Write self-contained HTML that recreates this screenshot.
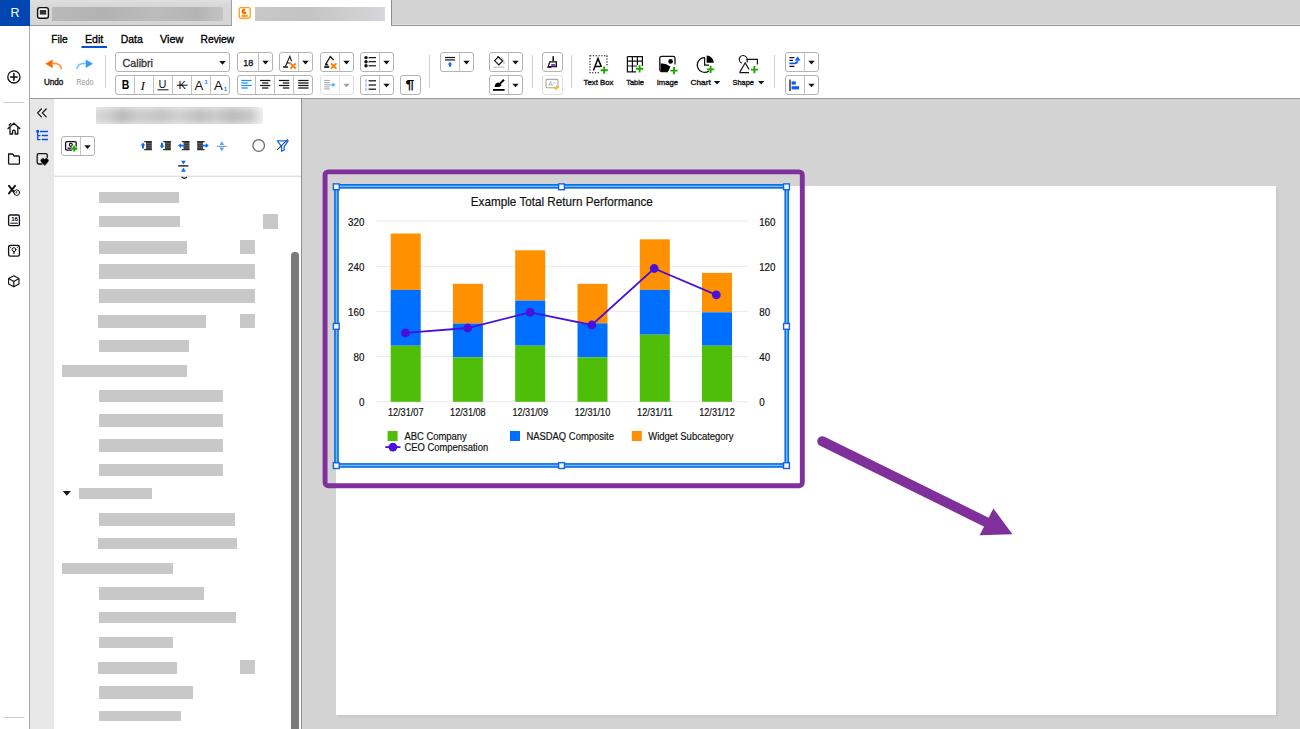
<!DOCTYPE html>
<html lang="en">
<head>
<meta charset="utf-8">
<title>Report Editor</title>
<style>
html,body{margin:0;padding:0;}
body{width:1300px;height:729px;overflow:hidden;position:relative;background:#d3d3d3;font-family:"Liberation Sans",sans-serif;color:#000;}
.abs{position:absolute;}
#side{left:0;top:0;width:29px;height:729px;background:#fff;border-right:1px solid #a8a8a8;}
#logo{left:0;top:0;width:30px;height:26px;background:#0047b3;color:#fff;font-size:12.5px;line-height:26px;text-align:center;}
#tabbar{left:30px;top:0;width:1270px;height:25px;background:#d3d3d3;border-bottom:1px solid #9a9a9a;box-shadow:inset 0 -1px 0 #dedede;}
#tab1{left:30px;top:0;width:201px;height:25px;background:linear-gradient(180deg,#dfdfdf,#d8d8d8 20%,#d5d5d5);border-right:1px solid #a0a0a0;}
#tab2{left:232px;top:0;width:159px;height:26px;background:#fff;border-right:1px solid #8e8e8e;}
#toolbar{left:30px;top:26px;width:1270px;height:72px;background:#fff;border-bottom:1px solid #9a9a9a;}
#strip{left:30px;top:99px;width:24.4px;height:630px;background:#e7e7e7;}
#panel{left:54px;top:99px;width:247px;height:630px;background:#fff;border-right:1px solid #929292;}
#page{left:336px;top:186px;width:940px;height:529px;background:#fff;box-shadow:2px 2px 2px #c8c8c8;}
.bar{position:absolute;background:#c8c8c8;}
</style>
</head>
<body>
<div class="abs" id="tabbar"></div>
<div class="abs" id="tab1"></div>
<div class="abs" id="tab2"></div>
<div class="abs" id="toolbar"></div>
<div class="abs" id="side"></div>
<div class="abs" id="logo">R</div>
<div class="abs" id="strip"></div>
<div class="abs" id="panel"></div>
<div class="abs" id="page"></div>
<!--TABS-->
<svg class="abs" style="left:0;top:0" width="400" height="27" viewBox="0 0 400 27">
<rect x="37.6" y="7.6" width="10.8" height="10.6" rx="2.2" fill="#f4f4f4" stroke="#111" stroke-width="1.4"/><rect x="39.8" y="10" width="6.4" height="4.6" fill="#333"/>
<rect x="239.2" y="7.6" width="11" height="10.8" rx="1.8" fill="#fff" stroke="#ff9a1a" stroke-width="1.3"/>
<path d="M244.3 11.4 L244.3 8.7 A2.7 2.7 0 1 0 247 11.4 Z" fill="#ff6a00" transform="rotate(25 244.3 11.4)"/>
<rect x="241.6" y="14.6" width="6.2" height="2.6" fill="#ffa31a"/>
</svg>
<div class="abs" style="left:52px;top:7.3px;width:171px;height:13.4px;background:linear-gradient(90deg,#b9b9b9,#b2b2b2 30%,#bcbcbc 60%,#b4b4b4 85%,#c4c4c4)"></div>
<div class="abs" style="left:255px;top:7.2px;width:129.6px;height:13.4px;background:linear-gradient(90deg,#c9c7c7,#c4c4c4 40%,#cdcdcd 70%,#d6d6dc)"></div>
<!--/TABS-->
<!--MENU-->
<svg class="abs" style="left:54px;top:99px" width="247" height="90" viewBox="54 99 247 90">
<rect x="61.5" y="136.5" width="33" height="19" rx="2.5" fill="#fff" stroke="#b4b4b4"/><line x1="80.5" x2="80.5" y1="137" y2="155" stroke="#c4c4c4"/>
<rect x="65.6" y="141.6" width="10.6" height="8.6" rx="1.4" fill="none" stroke="#111" stroke-width="1.3"/><circle cx="70.8" cy="144.8" r="1.5" fill="none" stroke="#111" stroke-width="1.2"/><path d="M67.6 148.2 H72.4" stroke="#111" stroke-width="1.3"/>
<circle cx="74.3" cy="148.6" r="2.9" fill="#fff"/><path d="M71.4 148.6 H77.2 M74.3 145.7 V151.5" stroke="#1fa700" stroke-width="2.1"/>
<polygon points="84.3,145.3 90.7,145.3 87.5,148.9" fill="#111"/>
<rect x="146" y="141.2" width="5.8" height="8.8" fill="#3a3a3a"/>
<line x1="146" x2="151.8" y1="143.4" y2="143.4" stroke="#777" stroke-width=".6"/>
<line x1="146" x2="151.8" y1="145.6" y2="145.6" stroke="#777" stroke-width=".6"/>
<line x1="146" x2="151.8" y1="147.8" y2="147.8" stroke="#777" stroke-width=".6"/>
<path d="M144.2 141.6 H151.8 M144.2 149.6 H151.8" stroke="#2e2e2e" stroke-width="1.2"/>
<polygon points="143,142.6 145.4,145.6 144,145.6 144,148.4 142,148.4 142,145.6 140.6,145.6" fill="#0a6cff"/>
<rect x="165" y="141.2" width="5.8" height="8.8" fill="#3a3a3a"/>
<line x1="165" x2="170.8" y1="143.4" y2="143.4" stroke="#777" stroke-width=".6"/>
<line x1="165" x2="170.8" y1="145.6" y2="145.6" stroke="#777" stroke-width=".6"/>
<line x1="165" x2="170.8" y1="147.8" y2="147.8" stroke="#777" stroke-width=".6"/>
<path d="M163.2 141.6 H170.8 M163.2 149.6 H170.8" stroke="#2e2e2e" stroke-width="1.2"/>
<polygon points="162,148.6 164.4,145.6 163,145.6 163,142.8 161,142.8 161,145.6 159.6,145.6" fill="#0a6cff"/>
<rect x="183.6" y="141.2" width="5.8" height="8.8" fill="#3a3a3a"/>
<line x1="183.6" x2="189.4" y1="143.4" y2="143.4" stroke="#777" stroke-width=".6"/>
<line x1="183.6" x2="189.4" y1="145.6" y2="145.6" stroke="#777" stroke-width=".6"/>
<line x1="183.6" x2="189.4" y1="147.8" y2="147.8" stroke="#777" stroke-width=".6"/>
<path d="M181.79999999999998 141.6 H189.4 M181.79999999999998 149.6 H189.4" stroke="#2e2e2e" stroke-width="1.2"/>
<polygon points="178,145.6 181,143.2 181,144.7 184.4,144.7 184.4,146.5 181,146.5 181,148" fill="#0a6cff"/>
<rect x="197.2" y="141.2" width="5.8" height="8.8" fill="#3a3a3a"/>
<line x1="197.2" x2="203.0" y1="143.4" y2="143.4" stroke="#777" stroke-width=".6"/>
<line x1="197.2" x2="203.0" y1="145.6" y2="145.6" stroke="#777" stroke-width=".6"/>
<line x1="197.2" x2="203.0" y1="147.8" y2="147.8" stroke="#777" stroke-width=".6"/>
<path d="M197.2 141.6 H204.6 M197.2 149.6 H204.6" stroke="#2e2e2e" stroke-width="1.2"/>
<polygon points="208.8,145.6 205.8,143.2 205.8,144.7 202.6,144.7 202.6,146.5 205.8,146.5 205.8,148" fill="#0a6cff"/>
<line x1="216.8" x2="226.8" y1="146.3" y2="146.3" stroke="#8a8a8a" stroke-width="1"/><polygon points="221.8,141 224.2,145 219.4,145" fill="#55aaff"/><polygon points="221.8,151.6 224.2,147.6 219.4,147.6" fill="#55aaff"/>
<circle cx="258.7" cy="145.5" r="5.8" fill="none" stroke="#6a6a6a" stroke-width="1.3"/>
<path d="M277.4 140.8 H288.2 L284.2 146.6 V150 L281.6 151.2 V146.6 Z" fill="none" stroke="#0a6cff" stroke-width="1.3" stroke-linejoin="round"/><line x1="277.2" y1="149.8" x2="287.8" y2="139.3" stroke="#444" stroke-width="1.1"/>
<line x1="178.2" x2="188.4" y1="165.9" y2="165.9" stroke="#111" stroke-width="1.3"/><polygon points="183.4,164.4 181,160.8 185.8,160.8" fill="#0a6cff"/><polygon points="183.4,167.6 181,171.8 185.8,171.8" fill="#0a6cff"/>
<rect x="54" y="175.6" width="247" height="1.5" fill="#e0e0e0"/>
<path d="M181.6 177 Q184.2 179.6 187 177" fill="none" stroke="#222" stroke-width="1.1"/>
</svg>
<!--/MENU-->
<!--TOOLBAR-->
<svg class="abs" style="left:0;top:0" width="1300" height="100" viewBox="0 0 1300 100" font-family="Liberation Sans, sans-serif">
<line x1="105.5" x2="105.5" y1="55" y2="88" stroke="#cfcfcf"/>
<line x1="429.5" x2="429.5" y1="55" y2="88" stroke="#cfcfcf"/>
<line x1="532.5" x2="532.5" y1="55" y2="88" stroke="#cfcfcf"/>
<line x1="571.5" x2="571.5" y1="55" y2="88" stroke="#cfcfcf"/>
<line x1="774.5" x2="774.5" y1="55" y2="88" stroke="#cfcfcf"/>
<text x="51.3" y="42.8" font-size="11.8" fill="#000" textLength="16.5" lengthAdjust="spacingAndGlyphs" stroke="#000" stroke-width="0.35">File</text>
<text x="84.9" y="42.8" font-size="11.8" fill="#000" textLength="18.4" lengthAdjust="spacingAndGlyphs" stroke="#000" stroke-width="0.35">Edit</text>
<text x="120.8" y="42.8" font-size="11.8" fill="#000" textLength="22.0" lengthAdjust="spacingAndGlyphs" stroke="#000" stroke-width="0.35">Data</text>
<text x="160" y="42.8" font-size="11.8" fill="#000" textLength="23.4" lengthAdjust="spacingAndGlyphs" stroke="#000" stroke-width="0.35">View</text>
<text x="200.5" y="42.8" font-size="11.8" fill="#000" textLength="33.7" lengthAdjust="spacingAndGlyphs" stroke="#000" stroke-width="0.35">Review</text>
<rect x="81.5" y="46" width="25.5" height="2" fill="#0a4fd8"/>
<polygon points="45.2,63.8 52.6,59.5 52.6,68" fill="#ff6a00"/><path d="M52.4 63.5 C57.5 63,61 65.2,61.5 69.2" fill="none" stroke="#ff9636" stroke-width="1.7"/>
<polygon points="93,63.8 85.7,59.5 85.7,68" fill="#3399ff"/><path d="M86 63.5 C81 63,77.5 65.2,76.8 69.2" fill="none" stroke="#7cc6ff" stroke-width="1.7"/>
<text x="43.9" y="85" font-size="8.2" fill="#111" textLength="19.4" lengthAdjust="spacingAndGlyphs" stroke="#111" stroke-width="0.35">Undo</text>
<text x="76.2" y="85" font-size="8.2" fill="#9a9a9a" textLength="17.4" lengthAdjust="spacingAndGlyphs">Redo</text>
<rect x="115.5" y="52.5" width="114.0" height="19.0" rx="2.5" fill="#fff" stroke="#b4b4b4"/>
<text x="122.6" y="66.9" font-size="10.4" fill="#333" textLength="30.3" lengthAdjust="spacingAndGlyphs" stroke="#333" stroke-width="0.3">Calibri</text>
<polygon points="219.3,61.099999999999994 225.7,61.099999999999994 222.5,64.7" fill="#111"/>
<rect x="237.5" y="52.5" width="35.0" height="19.0" rx="2.5" fill="#fff" stroke="#b4b4b4"/>
<line x1="258.5" x2="258.5" y1="53.0" y2="71.0" stroke="#c2c2c2"/>
<text x="243.3" y="66" font-size="9" fill="#111" textLength="10" lengthAdjust="spacingAndGlyphs" stroke="#111" stroke-width="0.3">18</text>
<polygon points="262.3,60.8 268.7,60.8 265.5,64.4" fill="#111"/>
<rect x="279.5" y="52.5" width="33.0" height="19.0" rx="2.5" fill="#fff" stroke="#b4b4b4"/>
<line x1="298.5" x2="298.5" y1="53.0" y2="71.0" stroke="#c2c2c2"/>
<path d="M285.6 66 L289.8 56.4 L291.6 61.2 M287.2 63 L290.6 63" fill="none" stroke="#111" stroke-width="1.1"/><rect x="283.2" y="66.2" width="4.6" height="1.6" fill="#111"/>
<path d="M290.4 63.4 L295.8 68.6 M295.8 63.4 L290.4 68.6" stroke="#ff7a00" stroke-width="1.9"/>
<polygon points="302.3,60.8 308.7,60.8 305.5,64.4" fill="#111"/>
<rect x="320.5" y="52.5" width="33.0" height="19.0" rx="2.5" fill="#fff" stroke="#b4b4b4"/>
<line x1="339.5" x2="339.5" y1="53.0" y2="71.0" stroke="#c2c2c2"/>
<path d="M325.6 64.5 L330.3 56.6 L333.6 60" fill="none" stroke="#111" stroke-width="1.2"/><path d="M324.6 65.4 L326.2 62.4 L328.8 65.4 Z" fill="#111"/><rect x="324.2" y="66.2" width="5" height="1.7" fill="#111"/>
<path d="M331 63.4 L336.4 68.6 M336.4 63.4 L331 68.6" stroke="#ff7a00" stroke-width="1.9"/>
<polygon points="343.3,60.8 349.7,60.8 346.5,64.4" fill="#111"/>
<rect x="360.5" y="52.5" width="33.0" height="19.0" rx="2.5" fill="#fff" stroke="#b4b4b4"/>
<line x1="379.5" x2="379.5" y1="53.0" y2="71.0" stroke="#c2c2c2"/>
<circle cx="366" cy="57.6" r="1.7" fill="#111"/><line x1="368.6" x2="376" y1="57.6" y2="57.6" stroke="#111" stroke-width="1.2"/>
<circle cx="366" cy="61.7" r="1.7" fill="#111"/><line x1="368.6" x2="376" y1="61.7" y2="61.7" stroke="#111" stroke-width="1.2"/>
<circle cx="366" cy="65.8" r="1.7" fill="#111"/><line x1="368.6" x2="376" y1="65.8" y2="65.8" stroke="#111" stroke-width="1.2"/>
<polygon points="383.3,60.8 389.7,60.8 386.5,64.4" fill="#111"/>
<rect x="115.5" y="75.5" width="114.0" height="19.0" rx="2.5" fill="#fff" stroke="#b4b4b4"/>
<line x1="134.5" x2="134.5" y1="76.0" y2="94.0" stroke="#c2c2c2"/>
<line x1="153.5" x2="153.5" y1="76.0" y2="94.0" stroke="#c2c2c2"/>
<line x1="172.5" x2="172.5" y1="76.0" y2="94.0" stroke="#c2c2c2"/>
<line x1="191.5" x2="191.5" y1="76.0" y2="94.0" stroke="#c2c2c2"/>
<line x1="210.5" x2="210.5" y1="76.0" y2="94.0" stroke="#c2c2c2"/>
<text x="121.7" y="89.4" font-size="12.5" fill="#000" textLength="7.6" lengthAdjust="spacingAndGlyphs" font-weight="bold">B</text>
<text x="140.6" y="89.6" font-size="13.5" font-style="italic" font-family="Liberation Serif, serif" fill="#111">I</text>
<text x="158.4" y="88.2" font-size="11" fill="#111">U</text>
<line x1="157.5" x2="168.5" y1="89.8" y2="89.8" stroke="#111"/>
<text x="178.6" y="89.2" font-size="11" fill="#111">K</text>
<line x1="177" x2="187.5" y1="85.2" y2="85.2" stroke="#111"/>
<text x="194.6" y="89.6" font-size="13.2" fill="#111">A</text>
<text x="204.6" y="83.6" font-size="6" fill="#1e7bff" font-weight="bold">1</text>
<text x="214" y="89.6" font-size="13.2" fill="#111">A</text>
<text x="223.8" y="91.2" font-size="6" fill="#1e7bff" font-weight="bold">1</text>
<rect x="237.5" y="75.5" width="75.0" height="19.0" rx="2.5" fill="#fff" stroke="#b4b4b4"/>
<line x1="255.5" x2="255.5" y1="76.0" y2="94.0" stroke="#c2c2c2"/>
<line x1="274.5" x2="274.5" y1="76.0" y2="94.0" stroke="#c2c2c2"/>
<line x1="293.5" x2="293.5" y1="76.0" y2="94.0" stroke="#c2c2c2"/>
<line x1="241.3" x2="251.70000000000002" y1="80.5" y2="80.5" stroke="#1e8fff" stroke-width="1.25"/>
<line x1="260.0" x2="270.4" y1="80.5" y2="80.5" stroke="#111" stroke-width="1.25"/>
<line x1="278.90000000000003" x2="289.3" y1="80.5" y2="80.5" stroke="#111" stroke-width="1.25"/>
<line x1="298.2" x2="308.6" y1="80.5" y2="80.5" stroke="#111" stroke-width="1.25"/>
<line x1="241.3" x2="247.8" y1="83" y2="83" stroke="#1e8fff" stroke-width="1.25"/>
<line x1="261.95" x2="268.45" y1="83" y2="83" stroke="#111" stroke-width="1.25"/>
<line x1="282.8" x2="289.3" y1="83" y2="83" stroke="#111" stroke-width="1.25"/>
<line x1="298.2" x2="308.6" y1="83" y2="83" stroke="#111" stroke-width="1.25"/>
<line x1="241.3" x2="251.70000000000002" y1="85.5" y2="85.5" stroke="#1e8fff" stroke-width="1.25"/>
<line x1="260.0" x2="270.4" y1="85.5" y2="85.5" stroke="#111" stroke-width="1.25"/>
<line x1="278.90000000000003" x2="289.3" y1="85.5" y2="85.5" stroke="#111" stroke-width="1.25"/>
<line x1="298.2" x2="308.6" y1="85.5" y2="85.5" stroke="#111" stroke-width="1.25"/>
<line x1="241.3" x2="247.8" y1="88" y2="88" stroke="#1e8fff" stroke-width="1.25"/>
<line x1="261.95" x2="268.45" y1="88" y2="88" stroke="#111" stroke-width="1.25"/>
<line x1="282.8" x2="289.3" y1="88" y2="88" stroke="#111" stroke-width="1.25"/>
<line x1="298.2" x2="308.6" y1="88" y2="88" stroke="#111" stroke-width="1.25"/>
<rect x="320.5" y="75.5" width="33.0" height="19.0" rx="2.5" fill="#fff" stroke="#e0e0e0"/>
<line x1="339.5" x2="339.5" y1="76.0" y2="94.0" stroke="#e6e6e6"/>
<line x1="324.2" x2="329.8" y1="80.5" y2="80.5" stroke="#a8a8a8" stroke-width="1.1"/>
<line x1="324.2" x2="329.8" y1="82.6" y2="82.6" stroke="#a8a8a8" stroke-width="1.1"/>
<line x1="324.2" x2="329.8" y1="84.7" y2="84.7" stroke="#a8a8a8" stroke-width="1.1"/>
<line x1="324.2" x2="329.8" y1="86.8" y2="86.8" stroke="#a8a8a8" stroke-width="1.1"/>
<line x1="324.2" x2="329.8" y1="88.9" y2="88.9" stroke="#a8a8a8" stroke-width="1.1"/>
<line x1="329.8" x2="333" y1="84.8" y2="84.8" stroke="#6bbcff" stroke-width="1.2"/><polygon points="332.4,82.4 335.6,84.8 332.4,87.2" fill="#4db2ff"/>
<polygon points="343.3,83.7 349.7,83.7 346.5,87.30000000000001" fill="#a0a0a0"/>
<rect x="360.5" y="75.5" width="33.0" height="19.0" rx="2.5" fill="#fff" stroke="#b4b4b4"/>
<line x1="379.5" x2="379.5" y1="76.0" y2="94.0" stroke="#c2c2c2"/>
<line x1="368.6" x2="376" y1="80.8" y2="80.8" stroke="#111" stroke-width="1.25"/>
<rect x="365.4" y="79.2" width="1.2" height="3.2" fill="#8fb4e8"/>
<line x1="368.6" x2="376" y1="85" y2="85" stroke="#111" stroke-width="1.25"/>
<rect x="365.4" y="83.4" width="1.2" height="3.2" fill="#8fb4e8"/>
<line x1="368.6" x2="376" y1="89.2" y2="89.2" stroke="#111" stroke-width="1.25"/>
<rect x="365.4" y="87.60000000000001" width="1.2" height="3.2" fill="#8fb4e8"/>
<polygon points="383.3,83.7 389.7,83.7 386.5,87.30000000000001" fill="#111"/>
<rect x="400.5" y="75.5" width="20.0" height="19.0" rx="2.5" fill="#fff" stroke="#b4b4b4"/>
<text x="405.4" y="88.9" font-size="13.5" fill="#000" textLength="8.8" lengthAdjust="spacingAndGlyphs" font-weight="bold">¶</text>
<rect x="440.5" y="52.5" width="33.0" height="19.0" rx="2.5" fill="#fff" stroke="#b4b4b4"/>
<line x1="459.5" x2="459.5" y1="53.0" y2="71.0" stroke="#c2c2c2"/>
<line x1="445" x2="455" y1="57.5" y2="57.5" stroke="#111" stroke-width="1.2"/><line x1="445" x2="455" y1="59.9" y2="59.9" stroke="#111" stroke-width="1.2"/>
<polygon points="450,62 452.4,64.4 451,64.4 451,66.8 449,66.8 449,64.4 447.6,64.4" fill="#0a6cff"/>
<polygon points="463.3,60.8 469.7,60.8 466.5,64.4" fill="#111"/>
<rect x="489.5" y="52.5" width="33.0" height="19.0" rx="2.5" fill="#fff" stroke="#b4b4b4"/>
<line x1="508.5" x2="508.5" y1="53.0" y2="71.0" stroke="#c2c2c2"/>
<path d="M494.6 60.6 L498.4 56.8 L502.6 61 L498.8 64.8 Z" fill="#fff" stroke="#111" stroke-width="1.2"/><path d="M497.6 56.2 L499.4 58" stroke="#111" stroke-width="1"/><path d="M501 57.5 Q504.4 59.4 504 64" fill="none" stroke="#bdbdbd" stroke-width="1.2"/><line x1="493.4" x2="504.2" y1="67.2" y2="67.2" stroke="#c6c6c6" stroke-width="1.2"/>
<polygon points="512.3,60.8 518.7,60.8 515.5,64.4" fill="#111"/>
<rect x="489.5" y="75.5" width="33.0" height="19.0" rx="2.5" fill="#fff" stroke="#b4b4b4"/>
<line x1="508.5" x2="508.5" y1="76.0" y2="94.0" stroke="#c2c2c2"/>
<path d="M494.6 87 Q494.6 82.6 499 82.4 L501.6 85 Q500.6 87.6 494.6 87 Z" fill="#000"/><line x1="500" x2="504" y1="83.6" y2="79.8" stroke="#000" stroke-width="2"/><rect x="493" y="89" width="11.6" height="1.8" fill="#000"/>
<polygon points="512.3,83.7 518.7,83.7 515.5,87.30000000000001" fill="#111"/>
<rect x="542.5" y="52.5" width="20.0" height="19.0" rx="2.5" fill="#fff" stroke="#b4b4b4"/>
<line x1="553.2" x2="553.2" y1="56.2" y2="61.6" stroke="#111" stroke-width="1.6"/><path d="M549.8 61.8 H556.4 V66.6 H548.2 Z" fill="#fff" stroke="#111" stroke-width="1.3"/><path d="M547.4 67.2 H551.6" stroke="#111" stroke-width="1.2"/><rect x="551.2" y="64" width="4.2" height="2.4" fill="#7a3bbd"/>
<rect x="542.5" y="75.5" width="20.0" height="19.0" rx="2.5" fill="#fff" stroke="#e0e0e0"/>
<rect x="546" y="79.4" width="12" height="8.4" rx="1" fill="#fff" stroke="#a9a9a9" stroke-width="1.1"/>
<text x="548.2" y="86" font-size="6.5" fill="#a5a5a5">A</text>
<path d="M552.6 84.2 L554.4 82.4 L555.6 84" fill="none" stroke="#b0b0b0" stroke-width=".7"/>
<path d="M553.6 88.6 L557 85.2 L559.6 86.8 L556.4 90 Z" fill="#ffb43a"/>
<rect x="590" y="55.8" width="17" height="17" fill="none" stroke="#111" stroke-width="1.1" stroke-dasharray="1.3 1.5"/>
<rect x="600" y="66.4" width="9" height="8" fill="#fff"/>
<path d="M593.4 70.4 L598 58.6 L601.4 66.8 M595 66.6 L600.6 66.6" fill="none" stroke="#000" stroke-width="1.5"/>
<path d="M600.6 70.2 H607.8000000000001 M604.2 66.60000000000001 V73.8" stroke="#1fa700" stroke-width="1.9" fill="none"/>
<text x="583.6" y="85" font-size="8.1" fill="#111" textLength="29.8" lengthAdjust="spacingAndGlyphs" stroke="#111" stroke-width="0.35">Text Box</text>
<path d="M627.4 56.6 H642.4 V66 M627.4 56.6 V71.8 H636 M627.4 61.2 H642.4 M627.4 66 H637 M632.4 56.6 V71.8 M637.4 56.6 V65" fill="none" stroke="#111" stroke-width="1.2"/>
<path d="M636.0 68.8 H643.2 M639.6 65.2 V72.39999999999999" stroke="#1fa700" stroke-width="1.9" fill="none"/>
<text x="626.2" y="85" font-size="8.1" fill="#111" textLength="17.8" lengthAdjust="spacingAndGlyphs" stroke="#111" stroke-width="0.35">Table</text>
<path d="M668 71.6 H661.6 Q659.8 71.6 659.8 69.8 V58.2 Q659.8 56.4 661.6 56.4 H673.2 Q675 56.4 675 58.2 V64.6" fill="none" stroke="#111" stroke-width="1.3"/>
<path d="M660.6 63.6 Q665 62.6 670.4 66.6 L668.6 71 H660.6 Z" fill="#000"/><circle cx="670.6" cy="61.4" r="2.3" fill="#000"/>
<path d="M670.4 70.6 H677.6 M674 67.0 V74.19999999999999" stroke="#1fa700" stroke-width="1.9" fill="none"/>
<text x="656.7" y="85" font-size="8.1" fill="#111" textLength="21.4" lengthAdjust="spacingAndGlyphs" stroke="#111" stroke-width="0.35">Image</text>
<path d="M704.4 57.6 A7.4 7.4 0 1 0 709 71" fill="none" stroke="#111" stroke-width="1.2"/><path d="M704.6 57.2 V65.2 H709" fill="none" stroke="#111" stroke-width="1.2"/>
<path d="M706.6 55.6 A7.2 7.2 0 0 1 713.8 62.8 H706.6 Z" fill="#000"/>
<path d="M707.0 69.4 H714.2 M710.6 65.80000000000001 V73.0" stroke="#1fa700" stroke-width="1.9" fill="none"/>
<text x="690.5" y="85" font-size="8.1" fill="#111" textLength="20.2" lengthAdjust="spacingAndGlyphs" stroke="#111" stroke-width="0.35">Chart</text>
<polygon points="713.8,80.89999999999999 720.2,80.89999999999999 717,84.5" fill="#111"/>
<path d="M747 60.4 A3.9 3.9 0 1 0 742 63.2" fill="none" stroke="#111" stroke-width="1.15"/>
<path d="M747.2 62.6 V59.4 H757.4 V64.6" fill="none" stroke="#111" stroke-width="1.15"/>
<path d="M739.6 72.6 L745.2 62.8 L749 69.4 M739.6 72.6 H749" fill="none" stroke="#111" stroke-width="1.15"/>
<path d="M750.8 69.6 H758.0 M754.4 66.0 V73.19999999999999" stroke="#1fa700" stroke-width="1.9" fill="none"/>
<text x="732.5" y="85" font-size="8.1" fill="#111" textLength="21.4" lengthAdjust="spacingAndGlyphs" stroke="#111" stroke-width="0.35">Shape</text>
<polygon points="758.0,80.89999999999999 764.4000000000001,80.89999999999999 761.2,84.5" fill="#111"/>
<rect x="785.5" y="52.5" width="33.0" height="19.0" rx="2.5" fill="#fff" stroke="#b4b4b4"/>
<line x1="804.5" x2="804.5" y1="53.0" y2="71.0" stroke="#c2c2c2"/>
<path d="M789.4 57.6 H794.4 M789.4 60.4 H793 M789.4 66.4 H794.4" stroke="#111" stroke-width="1.1"/><path d="M789.4 63.4 H794.6 Q797.6 63.4 797.6 60.2" fill="none" stroke="#0a5cff" stroke-width="1.6"/><polygon points="794.6,60.4 797.6,56.4 800.6,60.4" fill="#0a5cff"/>
<polygon points="808.3,60.8 814.7,60.8 811.5,64.4" fill="#111"/>
<rect x="785.5" y="75.5" width="33.0" height="19.0" rx="2.5" fill="#fff" stroke="#b4b4b4"/>
<line x1="804.5" x2="804.5" y1="76.0" y2="94.0" stroke="#c2c2c2"/>
<line x1="790" x2="790" y1="79.4" y2="91" stroke="#111" stroke-width="1.3"/><rect x="791.6" y="81.4" width="4.2" height="3.2" fill="#0a5cff"/><rect x="791.6" y="86.2" width="7.4" height="3.2" fill="#0a5cff"/>
<polygon points="808.3,83.7 814.7,83.7 811.5,87.30000000000001" fill="#111"/>
</svg>
<!--/TOOLBAR-->
<!--SIDEICONS-->
<svg class="abs" style="left:0;top:0" width="60" height="729" viewBox="0 0 60 729" fill="none" stroke="#111" stroke-width="1.3" stroke-linejoin="round" stroke-linecap="round">
<circle cx="13.9" cy="76.9" r="6.1"/><path d="M10.6 76.9 H17.2 M13.9 73.6 V80.2" stroke-width="1.5"/>
<line x1="3.5" x2="23.8" y1="102.5" y2="102.5" stroke="#cfcfcf" stroke-width="1"/>
<line x1="3.5" x2="23.8" y1="717.5" y2="717.5" stroke="#cfcfcf" stroke-width="1"/>
<path d="M8 128.6 L13.9 123.2 L19.8 128.6 M10 127.6 V134 H12.6 V131.4 A1.3 1.3 0 0 1 15.2 131.4 V134 H17.8 V127.6"/><path d="M9.2 125 L10.8 123.6" />
<path d="M8.6 154 H12.6 L14.2 156 H18.4 Q19.4 156 19.4 157 V163.2 Q19.4 164.2 18.4 164.2 H9.6 Q8.6 164.2 8.6 163.2 Z"/>
<path d="M9 185.8 L15 193.4 M9 193.4 L15 185.8" stroke-width="1.9"/><circle cx="16.8" cy="192.6" r="2.8" fill="#fff" stroke-width="1"/><path d="M16.8 191.4 V192.8 H15.8" stroke-width=".8"/>
<rect x="8.6" y="215" width="10.8" height="10.6" rx="1.4"/><line x1="10.6" x2="17.4" y1="223.2" y2="223.2" stroke-width="1"/>
<rect x="8.6" y="245.4" width="10.8" height="10.8" rx="1.6"/><circle cx="14" cy="249.6" r="1.9" stroke-width="1"/><path d="M14 251.6 V253.4" stroke-width="1.2"/><path d="M9.6 246.4 L11 247.8 M18.4 246.4 L17 247.8" stroke-width=".8"/>
<path d="M13.8 275.8 L19 278.6 V284 L13.8 286.8 L8.6 284 V278.6 Z M8.6 278.6 L13.8 281.4 L19 278.6 M13.8 281.4 V286.8" stroke-width="1.15"/>
<path d="M41.4 109 L37.6 112.9 L41.4 116.8 M46.2 109 L42.4 112.9 L46.2 116.8" stroke-width="1.2"/>
<g stroke="#0a50e6" stroke-width="1.3"><path d="M37.6 130.4 V139.6 H40 M37.6 135.6 H40"/><path d="M40.4 131.6 H47.4 M42.4 135.6 H47.4 M42.4 139.6 H47.4" stroke-width="1.5"/></g><rect x="36.4" y="130" width="2.6" height="2.6" fill="#0a50e6" stroke="none"/>
<path d="M42 164 H38.6 Q37.2 164 37.2 162.6 V155 Q37.2 153.6 38.6 153.6 H45.8 Q47.2 153.6 47.2 155 V157.6" stroke-width="1.3"/>
<path d="M44.6 165.2 L41.2 161.8 A2 2 0 0 1 44.6 159.4 A2 2 0 0 1 48 161.8 Z" fill="#000" stroke-width=".6"/>
</svg>
<div class="abs" style="left:10.4px;top:216.2px;width:8px;font-size:6px;line-height:7px;font-weight:bold;text-align:center;letter-spacing:-.3px">16</div>
<!--/SIDEICONS-->
<!--PANEL-->
<div class="bar" style="left:98.9px;top:191.9px;width:80.0px;height:10.8px"></div>
<div class="bar" style="left:98.9px;top:216.0px;width:81.2px;height:10.9px"></div>
<div class="bar" style="left:262.8px;top:214.0px;width:15.1px;height:14.9px"></div>
<div class="bar" style="left:98.9px;top:241.0px;width:88.1px;height:12.6px"></div>
<div class="bar" style="left:239.9px;top:240.0px;width:15.1px;height:13.6px"></div>
<div class="bar" style="left:98.9px;top:264.0px;width:156.1px;height:14.8px"></div>
<div class="bar" style="left:98.9px;top:288.9px;width:156.1px;height:13.8px"></div>
<div class="bar" style="left:97.9px;top:315.0px;width:107.9px;height:12.7px"></div>
<div class="bar" style="left:240.0px;top:314.0px;width:15.0px;height:13.7px"></div>
<div class="bar" style="left:98.9px;top:340.0px;width:89.9px;height:11.9px"></div>
<div class="bar" style="left:62.2px;top:365.4px;width:124.8px;height:11.2px"></div>
<div class="bar" style="left:99.0px;top:390.2px;width:124.0px;height:11.7px"></div>
<div class="bar" style="left:99.0px;top:414.4px;width:124.0px;height:12.3px"></div>
<div class="bar" style="left:99.0px;top:438.9px;width:124.0px;height:12.8px"></div>
<div class="bar" style="left:99.0px;top:463.9px;width:124.0px;height:12.0px"></div>
<div class="bar" style="left:79.2px;top:488.1px;width:72.7px;height:10.5px"></div>
<div class="bar" style="left:99.0px;top:512.9px;width:136.0px;height:12.8px"></div>
<div class="bar" style="left:98.2px;top:538.1px;width:138.8px;height:10.7px"></div>
<div class="bar" style="left:62.2px;top:563.0px;width:110.5px;height:10.7px"></div>
<div class="bar" style="left:99.0px;top:586.8px;width:104.8px;height:12.8px"></div>
<div class="bar" style="left:99.0px;top:612.1px;width:136.8px;height:10.7px"></div>
<div class="bar" style="left:99.0px;top:637.2px;width:73.7px;height:10.7px"></div>
<div class="bar" style="left:98.2px;top:662.0px;width:78.6px;height:11.5px"></div>
<div class="bar" style="left:240.0px;top:659.9px;width:15.0px;height:13.9px"></div>
<div class="bar" style="left:99.0px;top:686.0px;width:94.0px;height:12.6px"></div>
<div class="bar" style="left:99.0px;top:710.6px;width:82.0px;height:10.9px"></div>
<svg class="abs" style="left:60px;top:488px" width="14" height="10" viewBox="60 488 14 10"><polygon points="62.8,490.9 70.8,490.9 66.8,495.7" fill="#111"/></svg>
<div class="abs" style="left:291.2px;top:251.6px;width:7.4px;height:480px;background:#7a7a7a;border-radius:3.7px 3.7px 0 0"></div>
<div class="abs" style="left:96.2px;top:106.9px;width:166.8px;height:16.9px;background:linear-gradient(180deg,rgba(255,255,255,.4),rgba(255,255,255,0) 35%,rgba(255,255,255,0) 70%,rgba(255,255,255,.35)),linear-gradient(90deg,#d9d9d9 0,#cfcfcf 7%,#bcbcbc 16%,#cdcdcd 25%,#c6c6c6 40%,#d1d1d1 50%,#c2c2c2 62%,#cbcbcb 72%,#bdbdbd 82%,#c9c9c9 92%,#eeeeee 100%)"></div>
<!--/PANEL-->
<!--CHART-->
<svg class="abs" style="left:0;top:0" width="1300" height="729" viewBox="0 0 1300 729" font-family="Liberation Sans, sans-serif" font-size="10" fill="#111">
<line x1="376" x2="748" y1="221.1" y2="221.1" stroke="#e9e9e9" stroke-width="1"/>
<line x1="376" x2="748" y1="266.3" y2="266.3" stroke="#e9e9e9" stroke-width="1"/>
<line x1="376" x2="748" y1="311.4" y2="311.4" stroke="#e9e9e9" stroke-width="1"/>
<line x1="376" x2="748" y1="356.6" y2="356.6" stroke="#e9e9e9" stroke-width="1"/>
<line x1="376" x2="748" y1="401.8" y2="401.8" stroke="#e9e9e9" stroke-width="1"/>
<rect x="390.7" y="233.5" width="30" height="56.4" fill="#ff9100"/>
<rect x="390.7" y="289.9" width="30" height="55.8" fill="#006fff"/>
<rect x="390.7" y="345.7" width="30" height="56.1" fill="#4fbe08"/>
<rect x="452.9" y="283.8" width="30" height="39.7" fill="#ff9100"/>
<rect x="452.9" y="323.5" width="30" height="33.8" fill="#006fff"/>
<rect x="452.9" y="357.3" width="30" height="44.5" fill="#4fbe08"/>
<rect x="515.2" y="250.3" width="30" height="50.3" fill="#ff9100"/>
<rect x="515.2" y="300.6" width="30" height="45.1" fill="#006fff"/>
<rect x="515.2" y="345.7" width="30" height="56.1" fill="#4fbe08"/>
<rect x="577.5" y="283.8" width="30" height="39.5" fill="#ff9100"/>
<rect x="577.5" y="323.3" width="30" height="34.0" fill="#006fff"/>
<rect x="577.5" y="357.3" width="30" height="44.5" fill="#4fbe08"/>
<rect x="639.8" y="239.3" width="30" height="50.6" fill="#ff9100"/>
<rect x="639.8" y="289.9" width="30" height="44.8" fill="#006fff"/>
<rect x="639.8" y="334.7" width="30" height="67.1" fill="#4fbe08"/>
<rect x="702.0" y="272.9" width="30" height="39.4" fill="#ff9100"/>
<rect x="702.0" y="312.3" width="30" height="33.4" fill="#006fff"/>
<rect x="702.0" y="345.7" width="30" height="56.1" fill="#4fbe08"/>
<polyline fill="none" stroke="#4a10dc" stroke-width="1.8" points="405.4,332.9 467.7,328.0 530.1,312.4 591.8,325.0 654.2,268.5 716.3,294.8"/>
<circle cx="405.4" cy="332.9" r="4.4" fill="#4a10dc"/>
<circle cx="467.7" cy="328.0" r="4.4" fill="#4a10dc"/>
<circle cx="530.1" cy="312.4" r="4.4" fill="#4a10dc"/>
<circle cx="591.8" cy="325.0" r="4.4" fill="#4a10dc"/>
<circle cx="654.2" cy="268.5" r="4.4" fill="#4a10dc"/>
<circle cx="716.3" cy="294.8" r="4.4" fill="#4a10dc"/>
<g stroke="#111" stroke-width=".18">
<text x="561.8" y="206.2" font-size="12.4" text-anchor="middle" textLength="182" lengthAdjust="spacingAndGlyphs">Example Total Return Performance</text>
<text x="364.4" y="225.5" text-anchor="end" textLength="16.3" lengthAdjust="spacingAndGlyphs">320</text>
<text x="364.4" y="270.7" text-anchor="end" textLength="16.3" lengthAdjust="spacingAndGlyphs">240</text>
<text x="364.4" y="315.8" text-anchor="end" textLength="16.3" lengthAdjust="spacingAndGlyphs">160</text>
<text x="364.4" y="361.0" text-anchor="end" textLength="10.9" lengthAdjust="spacingAndGlyphs">80</text>
<text x="364.4" y="406.2" text-anchor="end" textLength="5.45" lengthAdjust="spacingAndGlyphs">0</text>
<text x="759.2" y="225.7" textLength="16.3" lengthAdjust="spacingAndGlyphs">160</text>
<text x="759.2" y="271.3" textLength="16.3" lengthAdjust="spacingAndGlyphs">120</text>
<text x="759.2" y="316.4" textLength="10.9" lengthAdjust="spacingAndGlyphs">80</text>
<text x="759.2" y="361.4" textLength="10.9" lengthAdjust="spacingAndGlyphs">40</text>
<text x="759.2" y="406.2" textLength="5.45" lengthAdjust="spacingAndGlyphs">0</text>
<text x="405.7" y="416.2" text-anchor="middle" textLength="35.6" lengthAdjust="spacingAndGlyphs">12/31/07</text>
<text x="467.9" y="416.2" text-anchor="middle" textLength="35.6" lengthAdjust="spacingAndGlyphs">12/31/08</text>
<text x="530.2" y="416.2" text-anchor="middle" textLength="35.6" lengthAdjust="spacingAndGlyphs">12/31/09</text>
<text x="592.5" y="416.2" text-anchor="middle" textLength="35.6" lengthAdjust="spacingAndGlyphs">12/31/10</text>
<text x="654.8" y="416.2" text-anchor="middle" textLength="35.6" lengthAdjust="spacingAndGlyphs">12/31/11</text>
<text x="717.0" y="416.2" text-anchor="middle" textLength="35.6" lengthAdjust="spacingAndGlyphs">12/31/12</text>
<rect x="387.6" y="431" width="10" height="10" fill="#4fbe08" stroke="none"/>
<text x="404.4" y="439.6" textLength="62.3" lengthAdjust="spacingAndGlyphs">ABC Company</text>
<rect x="510" y="431" width="10" height="10" fill="#006fff" stroke="none"/>
<text x="526.4" y="439.6" textLength="87.5" lengthAdjust="spacingAndGlyphs">NASDAQ Composite</text>
<rect x="631.8" y="431" width="10" height="10" fill="#ff9100" stroke="none"/>
<text x="648.2" y="439.6" textLength="85.3" lengthAdjust="spacingAndGlyphs">Widget Subcategory</text>
<line x1="385.3" x2="400.5" y1="447.1" y2="447.1" stroke="#4a10dc" stroke-width="1.8"/><circle cx="392.9" cy="447.1" r="4.4" fill="#4a10dc" stroke="none"/>
<text x="404.4" y="450.5" textLength="83.8" lengthAdjust="spacingAndGlyphs">CEO Compensation</text>
</g></svg>
<!--/CHART-->
<!--OVERLAY-->
<svg class="abs" style="left:0;top:0" width="1300" height="729" viewBox="0 0 1300 729">
<rect x="336.45" y="186.35" width="450.3" height="279.1" fill="none" stroke="#0d6fe6" stroke-width="4.7"/>
<rect x="336.45" y="186.35" width="450.3" height="279.1" fill="none" stroke="#74bdf7" stroke-width="1.4"/>
<rect x="333.4" y="183.9" width="5.8" height="5.8" fill="#fff" stroke="#0f62ea" stroke-width="1.4"/>
<rect x="333.4" y="323.5" width="5.8" height="5.8" fill="#fff" stroke="#0f62ea" stroke-width="1.4"/>
<rect x="333.4" y="462.7" width="5.8" height="5.8" fill="#fff" stroke="#0f62ea" stroke-width="1.4"/>
<rect x="558.6" y="183.9" width="5.8" height="5.8" fill="#fff" stroke="#0f62ea" stroke-width="1.4"/>
<rect x="558.6" y="462.7" width="5.8" height="5.8" fill="#fff" stroke="#0f62ea" stroke-width="1.4"/>
<rect x="783.6" y="183.9" width="5.8" height="5.8" fill="#fff" stroke="#0f62ea" stroke-width="1.4"/>
<rect x="783.6" y="323.5" width="5.8" height="5.8" fill="#fff" stroke="#0f62ea" stroke-width="1.4"/>
<rect x="783.6" y="462.7" width="5.8" height="5.8" fill="#fff" stroke="#0f62ea" stroke-width="1.4"/>
<rect x="325.05" y="171.85" width="477.25" height="313.95" rx="3.3" fill="none" stroke="#80309b" stroke-width="4.9"/>
<line x1="822.3" y1="441.3" x2="990" y2="523.9" stroke="#80309b" stroke-width="10" stroke-linecap="round"/>
<polygon points="1012.5,534.2 993.4,508.4 979.6,535.2" fill="#80309b"/>
</svg>
<!--/OVERLAY-->
</body>
</html>
